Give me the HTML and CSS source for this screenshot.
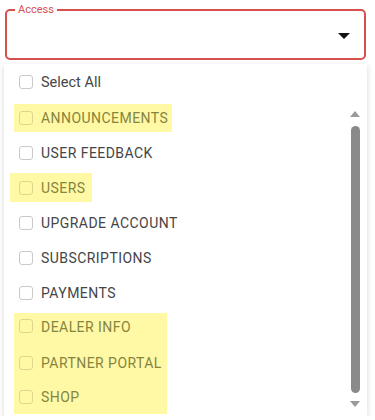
FILE: index.html
```html
<!DOCTYPE html>
<html lang="en">
	<head>
		<meta charset="UTF-8" />
		<meta name="viewport" content="width=device-width, initial-scale=1.0" />
		<title>Access</title>
		<link rel="stylesheet" href="styles.css">
	</head>

	<body>
		<div class="select">
			<span class="select-label">Access</span>
			<span class="caret"></span>
		</div>

		<div class="menu">
			<div class="row head">
				<span class="box"></span>
				<span>Select All</span>
			</div>

			<div class="scroll">
				<div class="list">
					<div class="row">
						<span class="mark first">
							<span class="box"></span>
							<span>ANNOUNCEMENTS</span>
						</span>
					</div>
					<div class="row">
						<span class="box"></span>
						<span>USER FEEDBACK</span>
					</div>
					<div class="row">
						<span class="mark users">
							<span class="box"></span>
							<span>USERS</span>
						</span>
					</div>
					<div class="row">
						<span class="box"></span>
						<span>UPGRADE ACCOUNT</span>
					</div>
					<div class="row">
						<span class="box"></span>
						<span>SUBSCRIPTIONS</span>
					</div>
					<div class="row">
						<span class="box"></span>
						<span>PAYMENTS</span>
					</div>
					<!-- highlighted block -->
					<div class="group">
						<div class="row">
							<span class="box"></span>
							<span>DEALER INFO</span>
						</div>
						<div class="row">
							<span class="box"></span>
							<span>PARTNER PORTAL</span>
						</div>
						<div class="row">
							<span class="box"></span>
							<span>SHOP</span>
						</div>
					</div>
				</div>

				<div class="scrollbar">
					<span class="arrow up"></span>
					<span class="thumb"></span>
					<span class="arrow down"></span>
				</div>
			</div>
		</div>
	</body>
</html>
```

FILE: styles.css
```css
:root {
	--accent: #d65050;
	--text: #454545;
	--box-border: #c9c9c9;
	--mark-bg: #fff9a6;
	--mark-text: #86843e;
	--mark-box: #dcd78c;
	--bar: #8a8a8a;
}

body {
	margin: 0;
	background-color: #fff;
	font-family: Roboto, "Liberation Sans", sans-serif;
	color: var(--text);
}

/* Select field */
.select {
	position: relative;
	display: flex;
	align-items: center;
	justify-content: flex-end;
	box-sizing: border-box;
	height: 51px;
	margin: 9px 9px 0 5px;
	padding-right: 14px;
	border: 2px solid var(--accent);
	border-radius: 5px;
}

.select-label {
	position: absolute;
	top: -8px;
	left: 8px;
	padding: 0 3px;
	background-color: #fff;
	font-size: 11px;
	line-height: 13px;
	color: var(--accent);
}

.caret {
	width: 0;
	height: 0;
	margin-top: 2px;
	border-left: 6px solid transparent;
	border-right: 6px solid transparent;
	border-top: 6px solid #111;
}

/* Dropdown panel */
.menu {
	box-sizing: border-box;
	height: 352px;
	margin: 4px 8px 0 4px;
	background-color: #fff;
	box-shadow: 0 2px 6px rgba(0, 0, 0, 0.16);
	overflow: hidden;
}

.row {
	display: flex;
	align-items: center;
	gap: 8px;
	height: 35px;
	padding-left: 15px;
	font-size: 14px;
}

.row.head {
	height: 36px;
	font-size: 14.5px;
}

.list .row {
	letter-spacing: 0.45px;
}

.box {
	flex: none;
	box-sizing: border-box;
	width: 14px;
	height: 14px;
	border: 1px solid var(--box-border);
	border-radius: 3px;
	background-color: #fff;
}

.scroll {
	display: flex;
}

.list {
	flex: 1;
}

/* Yellow highlights */
.mark {
	display: flex;
	align-items: center;
	gap: 8px;
	height: 28px;
	background-color: var(--mark-bg);
	color: var(--mark-text);
}

.mark.first {
	margin-left: -5px;
	padding: 0 4px 0 5px;
}

.mark.users {
	height: 29px;
	margin-left: -9px;
	padding: 0 6px 0 9px;
}

.group {
	width: fit-content;
	margin: 3px 0 0 10px;
	padding-right: 5px;
	background-color: var(--mark-bg);
	color: var(--mark-text);
}

.group .row {
	height: 34px;
	padding-left: 5px;
}

.group .row:first-child {
	height: 27px;
	align-items: flex-start;
	padding-top: 6px;
}

.mark .box,
.group .box {
	background-color: transparent;
	border-color: var(--mark-box);
}

/* Scrollbar */
.scrollbar {
	display: flex;
	flex-direction: column;
	align-items: center;
	width: 14px;
	padding: 11px 5px 0 0;
}

.arrow {
	width: 0;
	height: 0;
	border-left: 5px solid transparent;
	border-right: 5px solid transparent;
}

.arrow.up {
	border-bottom: 6px solid #9a9a9a;
}

.arrow.down {
	border-top: 6px solid #9a9a9a;
}

.thumb {
	width: 9px;
	height: 267px;
	margin: 9px 0 8px;
	border-radius: 5px;
	background-color: var(--bar);
}
```
